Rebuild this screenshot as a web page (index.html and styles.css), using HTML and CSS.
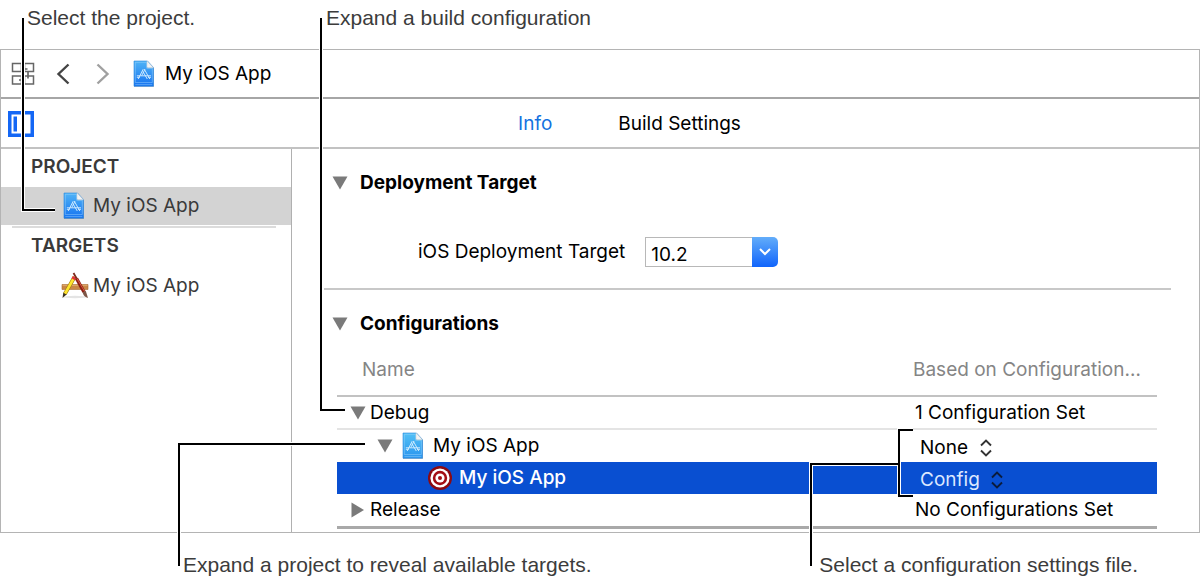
FILE: index.html
```
<!DOCTYPE html>
<html lang="en">
<head>
<meta charset="utf-8">
<title>My iOS App</title>
<link rel="stylesheet" href="styles.css">
</head>
<body>
<svg class="symbols" aria-hidden="true">
  <defs>
    <linearGradient id="doc-fill" x1="0" y1="0" x2="0" y2="1">
      <stop offset="0" stop-color="#4fb3f6"/>
      <stop offset="1" stop-color="#1673f0"/>
    </linearGradient>
    <linearGradient id="doc-fill-light" x1="0" y1="0" x2="0" y2="1">
      <stop offset="0" stop-color="#52c0f5"/>
      <stop offset="1" stop-color="#2a95ee"/>
    </linearGradient>
  </defs>
  <symbol id="doc" viewBox="0 0 22 28">
    <path d="M1 1.500h13.500L21 8v19H1z" fill="#000" opacity=".22"/>
    <path d="M1 1h13.500L20.500 7.500V26.200H1z" fill="var(--doc-fill)" stroke="#2a86dd" stroke-width=".6"/>
    <path d="M2.300 2.300h11.400v6h5.600v14.200H2.300zM2.300 24.600h17" fill="none" stroke="#a9dcff" stroke-width=".7" opacity=".6"/>
    <path d="M14 1l6.500 6.800H15.200q-1.200 0-1.200-1.200z" fill="#f3f3f3" stroke="#c5c9cd" stroke-width=".5"/>
    <g fill="none" stroke="#d9efff" stroke-width=".9">
      <path d="M10.200 9.200L5.200 19M11.300 9.200L16.800 19M12 9.200L8.800 15.500M9.800 11.500L14.300 19"/>
      <path d="M3.800 15.800h14.200M3.800 17.300h3M15 17.300h3"/>
    </g>
  </symbol>
  <symbol id="popup-arrows" viewBox="0 0 12 18">
    <path d="M1 6.500L6 1.500l5 5M1 11.500L6 16.500l5-5" fill="none" stroke="currentColor" stroke-width="1.900"/>
  </symbol>
</svg>

<main class="figure">
  <div class="captions captions-top">
    <p class="caption caption-project">Select the project.</p>
    <p class="caption caption-build">Expand a build configuration</p>
  </div>

  <div class="editor">
    <nav class="jump-bar" aria-label="Jump bar">
      <button class="icon-button related" aria-label="Related items">
        <svg width="24" height="24" viewBox="0 0 24 24" fill="none" stroke="#666" stroke-width="1.500">
          <path d="M1.500 1.500h9v8h-9zM13.500 1.500h9v8h-9zM1.500 14h9v8h-9zM13.500 14h9v8h-9z"/>
          <path d="M13.500 7h3M17 9.500v7M8 18h2.500" stroke-width="1.700"/>
        </svg>
      </button>
      <button class="icon-button back" aria-label="Back">
        <svg width="14" height="22" viewBox="0 0 14 22" fill="none" stroke="#444" stroke-width="2.400"><path d="M12.500 1.500L2.500 11l10 9.500"/></svg>
      </button>
      <button class="icon-button forward" aria-label="Forward">
        <svg width="14" height="22" viewBox="0 0 14 22" fill="none" stroke="#a0a0a0" stroke-width="2.400"><path d="M1.500 1.500l10 9.500-10 9.500"/></svg>
      </button>
      <svg class="doc-icon" aria-hidden="true"><use href="#doc"/></svg>
      <span class="crumb">My iOS App</span>
    </nav>

    <div class="tab-bar">
      <button class="icon-button toggle" aria-label="Hide project and targets list">
        <svg width="26" height="26" viewBox="0 0 26 26"><path d="M0 0h26v26H0zM3.500 3.500v19h19v-19z" fill="#1467f5" fill-rule="evenodd"/><path d="M5.500 5.500H9v15H5.500z" fill="#1467f5"/></svg>
      </button>
      <div class="tabs" role="tablist">
        <button class="tab tab-active" role="tab" aria-selected="true">Info</button>
        <button class="tab" role="tab" aria-selected="false">Build Settings</button>
      </div>
    </div>

    <div class="panes">
      <aside class="sidebar">
        <h2 class="group">PROJECT</h2>
        <button class="item item-selected"><svg class="doc-icon" aria-hidden="true"><use href="#doc"/></svg>My iOS App</button>
        <hr class="side-rule">
        <h2 class="group">TARGETS</h2>
        <button class="item item-target">
          <svg width="28" height="28" viewBox="0 0 28 28" aria-hidden="true">
            <ellipse cx="14" cy="25" rx="12" ry="1.200" fill="#e4e4e4"/>
            <path d="M1 12.500h26v5H1z" fill="#c98746" stroke="#a66a30" stroke-width=".6"/>
            <path d="M1.500 13.300h25" stroke="#e3ad71"/>
            <path d="M13.500 5L3.800 22" stroke="#9b7a10" stroke-width="3.800"/>
            <path d="M13.500 5L3.800 22" stroke="#ffe52e" stroke-width="2.600"/>
            <path d="M12 4l3 2-1.300 2.300-3.200-2z" fill="#e8323a"/>
            <path d="M2.300 20.700l3.200 1.800L1.500 26z" fill="#3d321f"/>
            <path d="M12.500 1l4 7" stroke="#7b2a1c" stroke-width="1.800"/>
            <path d="M15.500 6.500L23 20" stroke="#8d1d12" stroke-width="3.400"/>
            <path d="M16 6.500L23.300 19" stroke="#d75b43" stroke-width="1"/>
            <path d="M21.500 20.500l3.200-1.800L27 26q-4-1-5.500-5.500z" fill="#7d5646"/>
          </svg>My iOS App</button>
      </aside>

      <section class="content">
        <div class="section-head">
          <button class="disclosure" aria-expanded="true" aria-label="Deployment Target section"><svg width="16" height="14" viewBox="0 0 16 14"><path d="M.5 .5h15L8 13.500z"/></svg></button>
          <h3 class="section-title">Deployment Target</h3>
        </div>
        <div class="field">
          <label for="target">iOS Deployment Target</label>
          <div class="combo">
            <input class="combo-input" id="target" type="text" value="10.2">
            <button class="combo-button" aria-label="Show versions"><svg width="14" height="10" viewBox="0 0 14 10" fill="none" stroke="#fff" stroke-width="2"><path d="M2 2l5 5 5-5"/></svg></button>
          </div>
        </div>
        <hr class="content-rule">
        <div class="section-head">
          <button class="disclosure" aria-expanded="true" aria-label="Configurations section"><svg width="16" height="14" viewBox="0 0 16 14"><path d="M.5 .5h15L8 13.500z"/></svg></button>
          <h3 class="section-title">Configurations</h3>
        </div>
        <table class="configs">
          <colgroup><col><col class="col-based"></colgroup>
          <thead>
            <tr><th class="head-name" scope="col">Name</th><th class="head-based" scope="col">Based on Configuration…</th></tr>
          </thead>
          <tbody>
            <tr class="row-config row-ruled">
              <td><div class="cell"><button class="disclosure" aria-expanded="true" aria-label="Debug"><svg width="16" height="14" viewBox="0 0 16 14"><path d="M.5 .5h15L8 13.500z"/></svg></button>Debug</div></td>
              <td class="based">1 Configuration Set</td>
            </tr>
            <tr class="row-project">
              <td><div class="cell cell-project"><button class="disclosure" aria-expanded="true" aria-label="My iOS App"><svg width="16" height="14" viewBox="0 0 16 14"><path d="M.5 .5h15L8 13.500z"/></svg></button><svg class="doc-icon doc-light" aria-hidden="true"><use href="#doc"/></svg>My iOS App</div></td>
              <td class="based based-menu"><div class="popup"><select class="popup-select" aria-label="Project configuration file"><option>None</option></select><svg class="popup-icon" aria-hidden="true"><use href="#popup-arrows"/></svg></div></td>
            </tr>
            <tr class="row-target">
              <td><div class="cell cell-target"><svg width="24" height="24" viewBox="0 0 24 24" aria-hidden="true"><circle cx="12" cy="12" r="12" fill="#8c0a12"/><circle cx="12" cy="12" r="9.600" fill="#fff"/><circle cx="12" cy="12" r="7.200" fill="#a30d14"/><circle cx="12" cy="12" r="4.600" fill="#fff"/><circle cx="12" cy="12" r="2" fill="#a30d14"/></svg>My iOS App</div></td>
              <td class="based based-menu"><div class="popup"><select class="popup-select" aria-label="Target configuration file"><option>Config</option></select><svg class="popup-icon" aria-hidden="true"><use href="#popup-arrows"/></svg></div></td>
            </tr>
            <tr class="row-config row-last">
              <td><div class="cell"><button class="disclosure" aria-expanded="false" aria-label="Release"><svg width="16" height="16" viewBox="0 0 16 16"><path d="M1.500 .5l12.500 7.500-12.500 7.500z"/></svg></button>Release</div></td>
              <td class="based">No Configurations Set</td>
            </tr>
          </tbody>
        </table>
      </section>
    </div>
  </div>

  <div class="captions captions-bottom">
    <p class="caption caption-targets">Expand a project to reveal available targets.</p>
    <p class="caption caption-settings">Select a configuration settings file.</p>
  </div>

  <svg class="leaders leaders-left" width="400" height="583" viewBox="0 0 400 583" aria-hidden="true">
    <path class="halo" d="M23 18V210H55M321 18V410H345M179 566V444H365"/>
    <path class="line" d="M23 18V210H55M321 18V410H345M179 566V444H365"/>
  </svg>
  <svg class="leaders leaders-right" width="400" height="583" viewBox="800 0 400 583" aria-hidden="true">
    <path class="halo" d="M913 430H899V496H913M899 464H811V566"/>
    <path class="line" d="M913 430H899V496H913M899 464H811V566"/>
  </svg>
</main>
</body>
</html>
```

FILE: styles.css
```
* { box-sizing: border-box; }

body {
  margin: 0;
  background: #fff;
  color: #000;
  font-family: Inter, "Liberation Sans", sans-serif;
  font-size: 19px;
  line-height: 24px;
}

button, input, select {
  margin: 0;
  padding: 0;
  border: 0;
  background: none;
  color: inherit;
  font: inherit;
}

h2, h3, p { margin: 0; }
svg { display: block; flex: none; }
.symbols { position: absolute; width: 0; height: 0; }

.figure { position: relative; min-width: 1000px; }

/* Captions around the editor */
.captions { display: flex; color: #3c3c3c; font-family: "Liberation Sans", Arial, sans-serif; font-size: 21px; white-space: nowrap; }
.captions-top { height: 49px; padding: 6px 0 0 27px; }
.caption-project { width: 299px; }
.captions-bottom { justify-content: space-between; padding: 20px 62px 6px 183px; }

/* Callout lines lie over the editor */
.leaders { position: absolute; top: 0; pointer-events: none; fill: none; }
.leaders-left { left: 0; }
.leaders-right { right: 0; }
.halo { stroke: #fff; stroke-width: 4; }
.line { stroke: #000; stroke-width: 2; }

.editor { border: 1px solid #b4b4b4; }

.jump-bar {
  display: flex;
  align-items: center;
  height: 49px;
  padding-left: 10px;
  border-bottom: 2px solid #a6a6a6;
}
.back { margin-left: 21px; }
.forward { margin-left: 26px; }
.doc-icon { --doc-fill: url(#doc-fill); width: 22px; height: 28px; }
.doc-light { --doc-fill: url(#doc-fill-light); }
.jump-bar .doc-icon { margin: 0 10px 0 23px; }

.tab-bar {
  display: flex;
  align-items: center;
  height: 50px;
  padding: 2px 0 0 7px;
  border-bottom: 2px solid #c2c2c2;
}
.tabs { display: flex; flex: 1; justify-content: center; gap: 66px; padding-left: 26px; }
.tab-active { color: #1372e0; }

.panes { display: flex; }

.sidebar { width: 291px; border-right: 1px solid #b0b0b0; color: #3a3a3a; }
.group { padding: 6px 0 0 30px; font-size: 19px; font-weight: 600; line-height: 24px; }
.item { display: flex; align-items: center; gap: 8px; width: 100%; height: 38px; padding-left: 62px; text-align: left; }
.item-selected { margin-top: 8px; background: #d3d3d3; }
.item-target { gap: 4px; margin-top: 9px; padding-left: 60px; }
.side-rule { height: 2px; margin: 1px 15px 0 11px; border: 0; background: #dcdcdc; }

.content { flex: 1; padding: 22px 28px 3px 32px; }
.section-head { display: flex; align-items: center; padding-left: 8px; }
.section-title { margin-left: 12px; font-size: 19px; font-weight: 700; }
.disclosure { fill: #7a7a7a; }

.field { display: flex; align-items: center; gap: 20px; padding: 42px 0 21px 94px; }
.combo { display: flex; height: 30px; }
.combo-input { width: 107px; padding: 5px 5px 0; border: 1px solid #b8b8b8; border-right: 0; }
.combo-button {
  display: grid;
  place-items: center;
  width: 26px;
  border-radius: 0 5px 5px 0;
  background: linear-gradient(#63adfa, #1064fb);
}
.content-rule { height: 2px; margin: 0 0 22px; border: 0; background: #c8c8c8; }

.configs { width: calc(100% - 27px); margin: 13px 14px 0 13px; border-spacing: 0; table-layout: fixed; }
.col-based { width: 246px; }
.configs th {
  height: 48px;
  padding: 0 0 4px 25px;
  border-bottom: 2px solid #c2c2c2;
  color: #858585;
  font-weight: 400;
  text-align: left;
}
.configs .head-based { padding-left: 2px; white-space: nowrap; }
.configs td { height: 32px; padding: 0; }
.configs .based { padding-left: 4px; }
.configs .based-menu { padding-left: 9px; }
.configs .row-ruled td { height: 33px; border-bottom: 2px solid #e4e4e4; }
.configs .row-target td { background: #094fd1; color: #fff; }
.configs .row-last td { height: 35px; border-bottom: 3px solid #a9a9a9; }
.row-target .cell { font-weight: 500; }
.cell { display: flex; align-items: center; gap: 4px; padding-left: 13px; }
.cell-project { gap: 9px; padding-left: 40px; }
.cell-target { gap: 7px; padding-left: 91px; }

.popup { display: flex; align-items: center; gap: 11px; padding-top: 3px; }
.popup-select { appearance: none; }
.popup-icon { width: 12px; height: 18px; color: #333; }
.row-target .popup-select { color: #dce8ff; }
.row-target .popup-icon { color: #0b1c3c; }
```
